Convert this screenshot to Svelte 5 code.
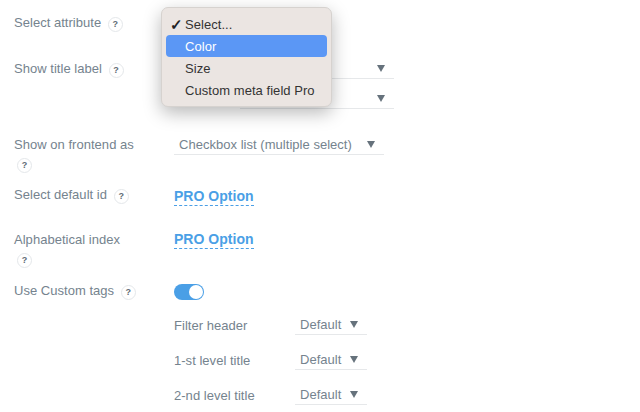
<script>
	const subRows = ["Filter header", "1-st level title", "2-nd level title"];
	const menuItems = ["Select...", "Color", "Size", "Custom meta field Pro"];
</script>

<div class="page">
	<div class="row first">
		<div class="label">Select attribute <span class="help">?</span></div>
	</div>

	<div class="row title-row">
		<div class="label">Show title label <span class="help">?</span></div>
		<div class="stack">
			<div class="select wide"><span class="arrow"></span></div>
			<div class="select wide"><span class="arrow"></span></div>
		</div>
	</div>

	<div class="row frontend-row">
		<div class="label narrow">Show on frontend as <span class="help">?</span></div>
		<div class="select full"><span>Checkbox list (multiple select)</span><span class="arrow"></span></div>
	</div>

	<div class="row default-row">
		<div class="label">Select default id <span class="help">?</span></div>
		<a class="pro" href="#pro">PRO Option</a>
	</div>

	<div class="row alpha-row">
		<div class="label narrow">Alphabetical index <span class="help">?</span></div>
		<a class="pro" href="#pro">PRO Option</a>
	</div>

	<div class="row tags-row">
		<div class="label">Use Custom tags <span class="help">?</span></div>
		<div class="toggle"><span class="knob"></span></div>
	</div>

	<div class="subs">
		{#each subRows as name}
			<div class="sub">
				<span class="sub-name">{name}</span>
				<div class="select small"><span>Default</span><span class="arrow"></span></div>
			</div>
		{/each}
	</div>

	<ul class="menu">
		{#each menuItems as item, i}
			<li class:active={i === 1}>
				<span class="check">{i === 0 ? "✓" : ""}</span>{item}
			</li>
		{/each}
	</ul>
</div>

<style>
	:global(body) {
		background: #fff;
		overflow: hidden;
	}

	.page {
		position: relative;
		width: 640px;
		height: 412px;
		overflow: hidden;
		box-sizing: border-box;
		padding-left: 14px;
		font-family: "Liberation Sans", Arial, sans-serif;
		font-size: 13px;
		color: #75838e;
		letter-spacing: 0.03px;
	}

	.row {
		display: grid;
		grid-template-columns: 160px 1fr;
		box-sizing: border-box;
	}

	.first {
		padding-top: 15px;
		height: 61px;
	}

	.title-row {
		height: 69px;
	}

	.frontend-row {
		height: 57px;
		padding-top: 5px;
	}

	.default-row {
		height: 43px;
	}

	.alpha-row {
		height: 53px;
	}

	.tags-row {
		height: 32px;
	}

	.label {
		line-height: 16px;
	}

	.narrow {
		width: 122px;
		line-height: 19px;
	}

	.help {
		display: inline-flex;
		align-items: center;
		justify-content: center;
		box-sizing: border-box;
		width: 15px;
		height: 15px;
		margin-left: 3px;
		border: 1px solid #e4e7ea;
		border-radius: 50%;
		font-size: 9px;
		font-weight: 700;
		line-height: 1;
		color: #5f6b75;
		vertical-align: 0;
	}

	.stack {
		margin-left: 66px;
		margin-top: -12px;
	}

	.select {
		display: flex;
		align-items: center;
		justify-content: space-between;
		box-sizing: border-box;
		border-bottom: 1px solid #e6e8ea;
	}

	.wide {
		width: 154px;
		height: 30px;
		padding: 9px 9px 0 0;
		justify-content: flex-end;
	}

	.full {
		width: 210px;
		height: 20px;
		padding: 0 9px 0 5px;
	}

	.small {
		width: 72px;
		height: 20px;
		padding: 0 9px 0 5px;
	}

	.arrow {
		width: 0;
		height: 0;
		border-left: 4px solid transparent;
		border-right: 4px solid transparent;
		border-top: 7px solid #66727c;
	}

	.pro {
		justify-self: start;
		align-self: start;
		margin-top: 1px;
		padding-bottom: 0;
		font-size: 14px;
		font-weight: 700;
		line-height: 17px;
		color: #4a9fe6;
		text-decoration: none;
		border-bottom: 1px dashed #4a9fe6;
	}

	.toggle {
		position: relative;
		width: 30px;
		height: 16px;
		margin-top: 1px;
		border-radius: 8px;
		background: #4a9fe6;
	}

	.knob {
		position: absolute;
		right: 1px;
		top: 1px;
		width: 14px;
		height: 14px;
		border-radius: 50%;
		background: #fff;
	}

	.subs {
		margin-left: 160px;
		display: flex;
		flex-direction: column;
		gap: 15px;
	}

	.sub {
		display: flex;
		align-items: center;
		height: 20px;
	}

	.sub-name {
		width: 121px;
	}

	.menu {
		position: absolute;
		left: 161px;
		top: 7px;
		width: 171px;
		height: 100px;
		box-sizing: border-box;
		margin: 0;
		padding: 5px 4px;
		list-style: none;
		border-radius: 7px;
		background: #ebe5e2;
		border: 1px solid #d6d2cf;
		box-shadow: 0 6px 18px rgba(0, 0, 0, 0.28);
		color: #333;
		letter-spacing: 0.05px;
	}

	.menu li {
		display: flex;
		height: 22px;
		line-height: 24px;
		border-radius: 4px;
	}

	.check {
		width: 19px;
		padding-left: 4px;
		box-sizing: border-box;
		font-size: 15px;
		font-weight: 700;
		color: #222;
	}

	.menu .active {
		background: #5b97f5;
		color: #fff;
	}
</style>
